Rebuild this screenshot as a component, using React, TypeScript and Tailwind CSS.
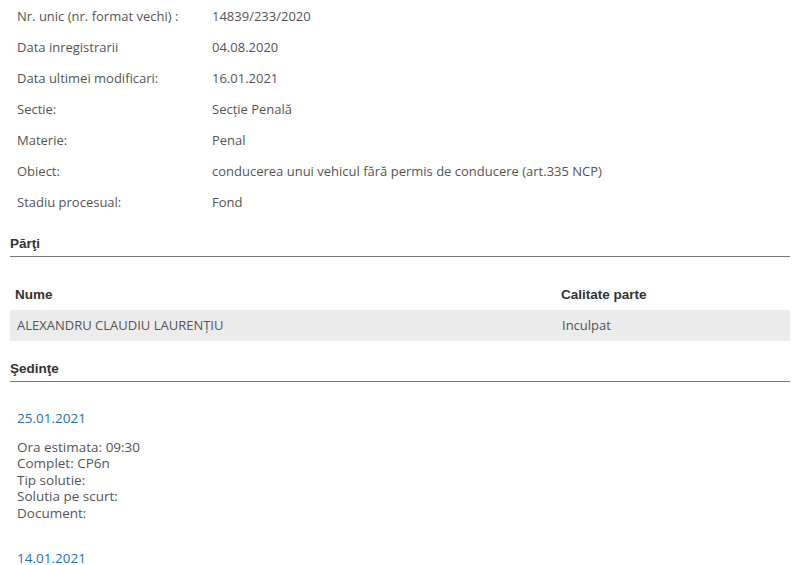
import React from "react";

const rows: [string, string][] = [
  ["Nr. unic (nr. format vechi) :", "14839/233/2020"],
  ["Data inregistrarii", "04.08.2020"],
  ["Data ultimei modificari:", "16.01.2021"],
  ["Sectie:", "Secție Penală"],
  ["Materie:", "Penal"],
  ["Obiect:", "conducerea unui vehicul fără permis de conducere (art.335 NCP)"],
  ["Stadiu procesual:", "Fond"],
];

const body = { fontFamily: '"Open Sans", "Noto Sans", sans-serif' };
const head = { fontFamily: '"Liberation Sans", Arial, sans-serif' };

export default function App() {
  return (
    <div className="w-[800px] h-[565px] overflow-hidden bg-white text-[#555]" style={body}>
      <div className="pt-[1px]">
        {rows.map(([l, v]) => (
          <div key={l} className="flex h-[31px] items-center text-[13px]">
            <div className="w-[212px] pl-[17px] shrink-0">{l}</div>
            <div>{v}</div>
          </div>
        ))}
      </div>
      <div className="mx-[10px] mt-[16px] border-b border-[#777] pb-[2px] text-[13.5px] font-bold text-[#333]" style={head}>
        Părţi
      </div>
      <div className="mx-[10px] mt-[22px]">
        <div className="flex h-[31px] items-center text-[13.5px] font-bold text-[#333]" style={head}>
          <div className="w-[551px] pl-[5px]">Nume</div>
          <div>Calitate parte</div>
        </div>
        <div className="flex h-[31px] items-center bg-[#ececec] text-[13px]">
          <div className="w-[551px] pl-[7px]">ALEXANDRU CLAUDIU LAURENȚIU</div>
          <div className="pl-[1px]">Inculpat</div>
        </div>
      </div>
      <div className="mx-[10px] mt-[18px] border-b border-[#777] pb-[1px] text-[13.5px] font-bold text-[#333]" style={head}>
        Şedinţe
      </div>
      <div className="pl-[17px] text-[13.5px]">
        <div className="mt-[26px] text-[#1f6fb5]">25.01.2021</div>
        <div className="mt-[11px] leading-[16.5px]">
          <div>Ora estimata: 09:30</div>
          <div>Complet: CP6n</div>
          <div>Tip solutie:</div>
          <div>Solutia pe scurt:</div>
          <div>Document:</div>
        </div>
        <div className="mt-[27px] text-[#1f6fb5]">14.01.2021</div>
      </div>
    </div>
  );
}
